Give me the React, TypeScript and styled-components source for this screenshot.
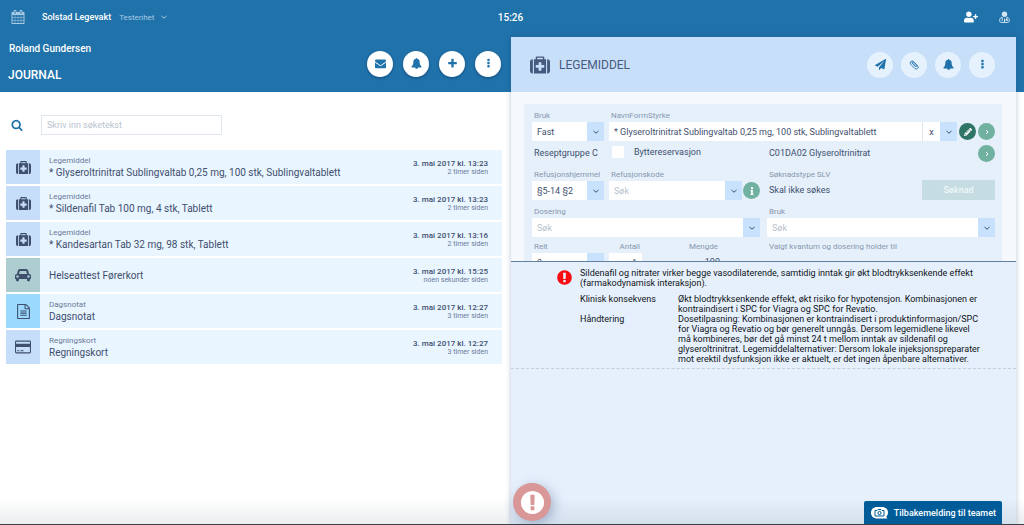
import React from 'react';
import styled, { createGlobalStyle } from 'styled-components';
import { FaInfo, FaPencilAlt, FaUserPlus } from 'react-icons/fa';

const blue = '#2072aa';
const ink = '#3f4f6e';
const muted = '#8797ae';

const GlobalStyle = createGlobalStyle`
  *, *::before, *::after { box-sizing: border-box; }
  body { margin: 0; font-family: Roboto, "Liberation Sans", sans-serif; font-size: 9px; color: ${ink}; background: #fff; }
  h1, h2, p, ul, dl, dd { margin: 0; padding: 0; }
  button, input, select { font: inherit; color: inherit; margin: 0; border: 0; padding: 0; border-radius: 0; background: none; outline: 0; min-width: 0; }
  button { cursor: pointer; }
  svg { display: block; flex: none; }
`;

const Page = styled.div`
  display: flex;
  flex-direction: column;
  min-height: 100vh;
`;

const TopBar = styled.header`
  display: grid;
  grid-template-columns: 1fr auto 1fr;
  align-items: center;
  height: 37px;
  padding: 0 14px 3px 11px;
  background: ${blue};
  color: #fff;
`;

const Unit = styled.div`
  display: flex;
  align-items: center;
  gap: 8px;
  font-size: 8px;
  color: #a9cbe4;
`;

const UnitName = styled.strong`
  margin-left: 9px;
  font-size: 9px;
  font-weight: 500;
  color: #fff;
`;

const PlainButton = styled.button`
  display: flex;
  align-items: center;
  gap: 7px;
`;

const Clock = styled.time`
  font-size: 10px;
  font-weight: 500;
`;

const Tools = styled.div`
  display: flex;
  justify-content: flex-end;
  align-items: center;
  gap: 21px;
`;

const Main = styled.main`
  flex: 1;
  display: grid;
  grid-template-columns: calc(50% + 3px) 1fr;
  padding-right: 8px;
  background: linear-gradient(${blue} 55px, #fff 55px);
`;

const Journal = styled.section`
  min-width: 0;
`;

const JournalHeader = styled.header`
  display: flex;
  justify-content: space-between;
  align-items: center;
  height: 55px;
  padding: 0 10px 2px 8px;
  color: #fff;
`;

const Patient = styled.p`
  padding: 0 1px 12px;
  font-size: 10px;
  line-height: 14px;
  font-weight: 500;
`;

const JournalTitle = styled.h1`
  padding-bottom: 4px;
  font-size: 12px;
  line-height: 14px;
  font-weight: 500;
`;

const Actions = styled.div<{ $gap: number }>`
  display: flex;
  gap: ${p => p.$gap}px;
`;

const RoundButton = styled.button<{ $pale?: boolean }>`
  display: flex;
  align-items: center;
  justify-content: center;
  width: 26px;
  height: 26px;
  border-radius: 50%;
  background: ${p => (p.$pale ? '#e5f2fd' : '#fff')};
  color: ${blue};
  box-shadow: ${p => (p.$pale ? 'none' : '0 1px 3px rgba(0, 30, 70, .45)')};
`;

const Search = styled.label`
  display: flex;
  align-items: center;
  gap: 18px;
  padding: 23px 11px 15px;
  color: ${blue};
`;

const SearchInput = styled.input`
  width: 181px;
  height: 20px;
  padding: 0 5px;
  border: 1px solid #dfe6ee;
  color: ${ink};
  &::placeholder { color: #bac4d0; opacity: 1; }
`;

const Entries = styled.ul`
  display: flex;
  flex-direction: column;
  gap: 2px;
  padding: 0 9px 0 6px;
  list-style: none;
`;

const Entry = styled.li`
  display: flex;
  align-items: center;
  height: 34px;
  padding-right: 14px;
  background: #e9f5ff;
`;

const EntryIcon = styled.span<{ $tone: string }>`
  display: flex;
  align-items: center;
  justify-content: center;
  width: 34px;
  height: 34px;
  background: ${p => p.$tone};
`;

const EntryText = styled.div`
  flex: 1;
  min-width: 0;
  padding: 2px 0 0 9px;
`;

const EntryType = styled.p`
  font-size: 8px;
  line-height: 10px;
  color: #6b7b98;
`;

const EntryTitle = styled.p`
  font-size: 10px;
  line-height: 14px;
`;

const EntryDate = styled.div`
  padding-top: 1px;
  font-size: 8px;
  line-height: 9px;
  font-weight: 500;
  text-align: right;
`;

const EntryAge = styled.p`
  font-size: 7px;
  font-weight: 400;
  color: #6b7b98;
`;

const Panel = styled.section`
  display: flex;
  flex-direction: column;
  min-width: 0;
  background: #f5f9fe;
  box-shadow: 0 0 5px rgba(30, 60, 120, .3);
`;

const PanelHeader = styled.header`
  display: flex;
  align-items: center;
  height: 55px;
  padding: 0 21px 0 19px;
  background: #c8dffa;
  color: #46597e;
`;

const PanelTitle = styled.h2`
  flex: 1;
  padding-left: 9px;
  font-size: 12px;
  font-weight: 400;
`;

const FormScroll = styled.div`
  height: 169px;
  padding: 12px 14px 0 13px;
  overflow: hidden;
`;

const Form = styled.form`
  display: flex;
  flex-direction: column;
  padding: 6px 7px 20px 8px;
  background: #e5f0fb;
`;

const Row = styled.div<{ $top?: number; $gap?: number; $align?: string }>`
  display: flex;
  flex: 1;
  min-width: 0;
  align-items: ${p => p.$align ?? 'flex-end'};
  gap: ${p => p.$gap ?? 7}px;
  padding-top: ${p => p.$top ?? 0}px;
`;

const Field = styled.label<{ $width?: number; $right?: boolean }>`
  flex: ${p => (p.$width ? `0 0 ${p.$width}px` : '1 1 0')};
  min-width: 0;
  text-align: ${p => (p.$right ? 'right' : 'left')};
`;

const Caption = styled.span`
  display: block;
  padding: 0 2px 1px;
  font-size: 8px;
  line-height: 11px;
  white-space: nowrap;
  color: ${muted};
`;

const Box = styled.span`
  display: grid;
  grid-template-columns: minmax(0, 1fr) auto 17px;
  height: 19px;
  background: #fff;
`;

const Select = styled.select`
  grid-area: 1 / 1 / 2 / 4;
  height: 19px;
  padding: 0 20px 0 5px;
  appearance: none;
`;

const SelectArrow = styled.span`
  display: flex;
  grid-area: 1 / 3;
  align-items: center;
  justify-content: center;
  background: #c8e1fc;
  pointer-events: none;
`;

const Input = styled.input`
  display: block;
  grid-area: 1 / 1;
  width: 100%;
  height: 19px;
  padding: 0 5px;
  background: #fff;
  text-align: inherit;
  &::placeholder { color: #b8c2cd; opacity: 1; }
`;

const ClearButton = styled.button`
  width: 18px;
  border-left: 1px solid #dfe6ee;
`;

const ArrowButton = styled.button`
  display: flex;
  grid-column: 3;
  align-items: center;
  justify-content: center;
  background: #c8e1fc;
`;

const GreenButton = styled.button<{ $dark?: boolean }>`
  display: flex;
  flex: none;
  align-items: center;
  justify-content: center;
  width: 17px;
  height: 17px;
  margin: 1px 0;
  border-radius: 50%;
  background: ${p => (p.$dark ? '#2f7566' : '#70b19f')};
  color: #fff;
`;

const Value = styled.p<{ $width?: number }>`
  flex: ${p => (p.$width ? `0 0 ${p.$width}px` : '1 1 0')};
  padding-left: 2px;
  line-height: 19px;
  white-space: nowrap;
`;

const Check = styled.label`
  display: flex;
  flex: 1;
  align-items: center;
  gap: 10px;
  padding-bottom: 3px;
`;

const CheckBox = styled.input`
  width: 12px;
  height: 12px;
  background: #fff;
  appearance: none;
  &:checked { background: ${blue}; }
`;

const ApplyButton = styled.button`
  width: 73px;
  height: 20px;
  border-radius: 1px;
  background: #c5dce2;
  color: #eff7f8;
  font-weight: 500;
`;

const Warning = styled.section`
  flex: 1;
  border-top: 1px solid #63809c;
  background: #e6f0fc;
  color: #101418;
`;

const WarningBody = styled.div`
  display: flex;
  gap: 7px;
  padding: 6px 24px 4px 45px;
  border-bottom: 1px dashed #c2cedb;
  line-height: 10px;
`;

const WarningIcon = styled.span`
  padding-top: 1px;
  color: #f80d12;
`;

const WarningText = styled.div`
  flex: 1;
`;

const Lead = styled.p`
  padding-bottom: 6px;
`;

const Details = styled.dl`
  display: grid;
  grid-template-columns: 98px 1fr;
`;

const BottomShade = styled.div`
  position: fixed;
  inset: auto 0 0;
  height: 26px;
  border-bottom: 1px solid #3c4148;
  background: linear-gradient(rgba(60, 80, 100, 0), rgba(60, 80, 100, .1));
  pointer-events: none;
`;

const AlertButton = styled.button`
  position: fixed;
  bottom: 4px;
  left: calc(50% + 1px);
  display: flex;
  align-items: center;
  justify-content: center;
  width: 38px;
  height: 38px;
  border-radius: 50%;
  background: #d99797;
  color: #fff;
  box-shadow: 3px 3px 12px rgba(50, 80, 130, .35);
`;

const Feedback = styled.button`
  position: fixed;
  right: 22px;
  bottom: 1px;
  display: flex;
  align-items: center;
  gap: 6px;
  height: 23px;
  padding: 0 6px 0 7px;
  border-radius: 2px 2px 0 0;
  background: #005b99;
  color: #fff;
  font-weight: 500;
`;

type GlyphProps = { d: string; size: number; box?: string };
const Glyph = ({ d, size, box = '0 0 1792 1792' }: GlyphProps) => (
  <svg width={size} height={size} viewBox={box} fill="currentColor" fillRule="evenodd" aria-hidden="true"><path d={d} /></svg>
);

const paths = {
  calendar: 'M192 1664h288v-288h-288v288zm352 0h320v-288h-320v288zm-352-352h288v-320h-288v320zm352 0h320v-320h-320v320zm-352-384h288v-288h-288v288zm736 736h320v-288h-320v288zm-384-736h320v-288h-320v288zm768 736h288v-288h-288v288zm-384-352h320v-320h-320v320zm-352-864v-288q0-13-9.500-22.500t-22.500-9.500h-64q-13 0-22.500 9.500t-9.500 22.500v288q0 13 9.500 22.500t22.500 9.500h64q13 0 22.500-9.500t9.500-22.500zm736 864h288v-320h-288v320zm-384-384h320v-288h-320v288zm384 0h288v-288h-288v288zm32-480v-288q0-13-9.500-22.500t-22.500-9.500h-64q-13 0-22.500 9.500t-9.500 22.500v288q0 13 9.500 22.500t22.500 9.500h64q13 0 22.500-9.500t9.500-22.500zm384-64v1280q0 52-38 90t-90 38h-1408q-52 0-90-38t-38-90v-1280q0-52 38-90t90-38h128v-96q0-66 47-113t113-47h64q66 0 113 47t47 113v96h384v-96q0-66 47-113t113-47h64q66 0 113 47t47 113v96h128q52 0 90 38t38 90z',
  search: 'M1216 832q0-185-131.500-316.500t-316.500-131.500-316.500 131.500-131.500 316.500 131.500 316.500 316.500 131.500 316.500-131.500 131.500-316.500zm512 832q0 52-38 90t-90 38q-54 0-90-38l-343-342q-179 124-399 124-143 0-273.500-55.500t-225-150-150-225-55.500-273.500 55.500-273.500 150-225 225-150 273.500-55.500 273.500 55.500 225 150 150 225 55.500 273.500q0 220-124 399l343 343q37 37 37 90z',
  medkit: 'M1280 1120v-192q0-32-32-32h-224v-224q0-32-32-32h-192q-32 0-32 32v224h-224q-32 0-32 32v192q0 32 32 32h224v224q0 32 32 32h192q32 0 32-32v-224h224q32 0 32-32zM640 384h512v-128h-512zM256 384v1280h-32q-92 0-158-66t-66-158v-832q0-92 66-158t158-66zM1440 384v1280h-1088v-1280h160v-160q0-40 28-68t68-28h576q40 0 68 28t28 68v160zM1792 608v832q0 92-66 158t-158 66h-32v-1280h32q92 0 158 66t66 158z',
  car: 'M480 1088q0-66-47-113t-113-47-113 47-47 113 47 113 113 47 113-47 47-113zm36-320h1016l-89-357q-2-8-14-17.500t-21-9.500h-768q-9 0-21 9.500t-14 17.500zm1372 320q0-66-47-113t-113-47-113 47-47 113 47 113 113 47 113-47 47-113zm160-96v384q0 14-9 23t-23 9h-96v128q0 80-56 136t-136 56-136-56-56-136v-128h-1024v128q0 80-56 136t-136 56-136-56-56-136v-128h-96q-14 0-23-9t-9-23v-384q0-93 65.500-158.500t158.500-65.500h28l105-419q23-94 104-157.500t179-63.500h768q98 0 179 63.500t104 157.500l105 419h28q93 0 158.500 65.500t65.500 158.500z',
  note: 'M1596 380q28 28 48 76t20 88v1152q0 40-28 68t-68 28h-1344q-40 0-68-28t-28-68v-1600q0-40 28-68t68-28h896q40 0 88 20t76 48zm-444-244v376h376q-10-29-22-41l-313-313q-12-12-41-22zm384 1528v-1024h-416q-40 0-68-28t-28-68v-416h-768v1536h1280zm-1024-864q0-14 9-23t23-9h704q14 0 23 9t9 23v64q0 14-9 23t-23 9h-704q-14 0-23-9t-9-23v-64zm736 224q14 0 23 9t9 23v64q0 14-9 23t-23 9h-704q-14 0-23-9t-9-23v-64q0-14 9-23t23-9h704zm0 256q14 0 23 9t9 23v64q0 14-9 23t-23 9h-704q-14 0-23-9t-9-23v-64q0-14 9-23t23-9h704z',
  card: 'M160 128h1600q160 0 160 160v1216q0 160-160 160h-1600q-160 0-160-160v-1216q0-160 160-160zM160 256q-32 0-32 32v224h1664v-224q0-32-32-32zM128 896v608q0 32 32 32h1600q32 0 32-32v-608zM256 1408v-128h256v128zM640 1408v-128h384v128z',
  mail: 'M1792 710v794q0 66-47 113t-113 47h-1472q-66 0-113-47t-47-113v-794q44 49 101 87 362 246 497 345 57 42 92.500 65.500t94.500 48 110 24.500h2q51 0 110-24.500t94.500-48 92.500-65.500q170-123 498-345 57-39 100-87zm0-294q0 79-49 151t-122 123q-376 261-468 325-10 7-42.500 31t-54 38.500-52 32.500-57.500 27-50 9h-2q-23 0-50-9t-57.500-27-52-32.500-54-38.500-42.500-31q-91-64-262-182.500t-205-142.500q-62-42-117-115.500t-55-136.500q0-78 41.500-130t118.500-52h1472q65 0 112.500 47t47.500 113z',
  bell: 'M912 1696q0-16-16-16-59 0-101.500-42.500t-42.500-101.500q0-16-16-16t-16 16q0 73 51.500 124.500t124.500 51.500q16 0 16-16zm816-288q0 52-38 90t-90 38h-448q0 106-75 181t-181 75-181-75-75-181h-448q-52 0-90-38t-38-90q50-42 91-88t85-119.500 74.500-158.500 50-206 19.500-260q0-152 117-282.500t307-158.500q-8-19-8-39 0-40 28-68t68-28 68 28 28 68q0 20-8 39 190 28 307 158.500t117 282.500q0 139 19.500 260t50 206 74.500 158.500 85 119.500 91 88z',
  plus: 'M1600 736v192q0 40-28 68t-68 28h-416v416q0 40-28 68t-68 28h-192q-40 0-68-28t-28-68v-416h-416q-40 0-68-28t-28-68v-192q0-40 28-68t68-28h416v-416q0-40 28-68t68-28h192q40 0 68 28t28 68v416h416q40 0 68 28t28 68z',
  dots: 'M1088 1248v192q0 40-28 68t-68 28h-192q-40 0-68-28t-28-68v-192q0-40 28-68t68-28h192q40 0 68 28t28 68zm0-512v192q0 40-28 68t-68 28h-192q-40 0-68-28t-28-68v-192q0-40 28-68t68-28h192q40 0 68 28t28 68zm0-512v192q0 40-28 68t-68 28h-192q-40 0-68-28t-28-68v-192q0-40 28-68t68-28h192q40 0 68 28t28 68z',
  plane: 'M1764 11q33 24 27 64l-256 1536q-5 29-32 45-14 8-31 8-11 0-24-5l-453-185-242 295q-18 23-49 23-13 0-22-4-19-7-30.500-23.500t-11.500-36.500v-349l864-1059-1069 925-395-162q-37-14-40-55-2-40 32-59l1664-960q15-9 32-9 20 0 36 11z',
  alert: 'M896 128q209 0 385.500 103t279.500 279.500 103 385.500-103 385.500-279.500 279.500-385.500 103-385.500-103-279.500-279.500-103-385.500 103-385.500 279.500-279.500 385.500-103zm128 1247v-190q0-14-9-23.500t-22-9.500h-192q-13 0-23 10t-10 23v190q0 13 10 23t23 10h192q13 0 22-9.500t9-23.500zm-2-344l18-621q0-12-10-18-10-8-24-8h-220q-14 0-24 8-10 6-10 18l17 621q0 10 10 17.500t24 7.500h185q14 0 23.500-7.500t10.500-17.500z',
};

const Chevron = ({ right }: { right?: boolean }) => (
  <svg width="6" height="6" viewBox="0 0 6 6" fill="none" stroke="currentColor" aria-hidden="true">
    <path d={right ? 'M2 1l2 2-2 2' : 'M.5 2L3 4.200 5.500 2'} />
  </svg>
);

const PaperclipIcon = () => (
  <svg width="10" height="10" viewBox="0 0 10 10" fill="none" stroke="currentColor" strokeWidth=".9" strokeLinecap="round" aria-hidden="true">
    <path d="M6.800 6.600L3.400 3.200a.9.900 0 0 1 1.300-1.300l3.900 3.900a1.900 1.900 0 0 1-2.700 2.700L1.600 4.200A2 2 0 0 1 4.400 1.400" />
    <path d="M3.400 3.200l3 3a.8.800 0 0 0 1.200-1.200L5 2.400" />
  </svg>
);

const DoctorIcon = () => (
  <svg width="11" height="12" viewBox="0 0 11 12" fill="none" stroke="#d3e5f2" aria-hidden="true">
    <circle cx="5.500" cy="3.200" r="2.700" fill="#d3e5f2" stroke="none" />
    <path d="M3 6.200C1.300 6.500.7 7.800.7 9.800c0 1 .6 1.600 1.500 1.600h6.600c.9 0 1.500-.6 1.500-1.600 0-2-.6-3.300-2.300-3.600M3.200 6.200v3.600M5.500 7.500v3.500M7.800 6.200v2.300M7 10V8.500h1.600V10" />
  </svg>
);

const FeedbackIcon = () => (
  <svg width="17" height="12" viewBox="0 0 17 12" aria-hidden="true">
    <path d="M6 0h5c3.500 0 6 2.300 6 5.500 0 1.800-.7 3.200-1.800 4.200l1.300 1.800H6c-3.500 0-6-2.500-6-5.800S2.500 0 6 0z" fill="#fff" />
    <path d="M4 3.500h2l1-1h3l1 1h2v5.500H4z" fill="none" stroke="#005b99" />
    <circle cx="8.500" cy="6" r="1.600" fill="none" stroke="#005b99" />
  </svg>
);

const drug = '* Glyseroltrinitrat Sublingvaltab 0,25 mg, 100 stk, Sublingvaltablett';
const medkit = <Glyph d={paths.medkit} size={15} />;

const entries = [
  { icon: medkit, tone: '#c7defa', type: 'Legemiddel', title: drug, date: '3. mai 2017 kl. 13:23', age: '2 timer siden' },
  { icon: medkit, tone: '#c7defa', type: 'Legemiddel', title: '* Sildenafil Tab 100 mg, 4 stk, Tablett', date: '3. mai 2017 kl. 13:23', age: '2 timer siden' },
  { icon: medkit, tone: '#c7defa', type: 'Legemiddel', title: '* Kandesartan Tab 32 mg, 98 stk, Tablett', date: '3. mai 2017 kl. 13:16', age: '2 timer siden' },
  { icon: <Glyph d={paths.car} size={16} box="0 0 2048 1792" />, tone: '#adcdd0', type: '', title: 'Helseattest Førerkort', date: '3. mai 2017 kl. 15:25', age: 'noen sekunder siden' },
  { icon: <Glyph d={paths.note} size={15} />, tone: '#9bdafe', type: 'Dagsnotat', title: 'Dagsnotat', date: '3. mai 2017 kl. 12:27', age: '3 timer siden' },
  { icon: <Glyph d={paths.card} size={16} box="0 0 1920 1792" />, tone: '#c7defa', type: 'Regningskort', title: 'Regningskort', date: '3. mai 2017 kl. 12:27', age: '3 timer siden' },
];

const SelectField = ({ label, value }: { label: string; value: string }) => (
  <Field $width={72}>
    <Caption>{label}</Caption>
    <Box>
      <Select defaultValue={value}><option>{value}</option></Select>
      <SelectArrow><Chevron /></SelectArrow>
    </Box>
  </Field>
);

const ComboField = ({ label, value, id }: { label: string; value?: string; id: string }) => (
  <Field as="div">
    <Caption as="label" htmlFor={id}>{label}</Caption>
    <Box>
      <Input id={id} type="text" placeholder="Søk" defaultValue={value} />
      {value && <ClearButton type="button" aria-label={`Tøm ${label}`}>x</ClearButton>}
      <ArrowButton type="button" aria-label={`Velg ${label}`}><Chevron /></ArrowButton>
    </Box>
  </Field>
);

export default function App() {
  return (
    <Page>
      <GlobalStyle />
      <TopBar>
        <Unit>
          <PlainButton type="button" aria-label="Kalender"><Glyph d={paths.calendar} size={14} /></PlainButton>
          <UnitName>Solstad Legevakt</UnitName>
          <PlainButton type="button">Testenhet <Chevron /></PlainButton>
        </Unit>
        <Clock>15:26</Clock>
        <Tools>
          <PlainButton type="button" aria-label="Ny pasient"><FaUserPlus size={14} /></PlainButton>
          <PlainButton type="button" aria-label="Bruker"><DoctorIcon /></PlainButton>
        </Tools>
      </TopBar>
      <Main>
        <Journal>
          <JournalHeader>
            <div>
              <Patient>Roland Gundersen</Patient>
              <JournalTitle>JOURNAL</JournalTitle>
            </div>
            <Actions $gap={10}>
              <RoundButton type="button" aria-label="Meldinger"><Glyph d={paths.mail} size={11} /></RoundButton>
              <RoundButton type="button" aria-label="Varsler"><Glyph d={paths.bell} size={11} /></RoundButton>
              <RoundButton type="button" aria-label="Ny"><Glyph d={paths.plus} size={11} /></RoundButton>
              <RoundButton type="button" aria-label="Mer"><Glyph d={paths.dots} size={11} /></RoundButton>
            </Actions>
          </JournalHeader>
          <Search>
            <Glyph d={paths.search} size={12} />
            <SearchInput type="text" placeholder="Skriv inn søketekst" aria-label="Søk" />
          </Search>
          <Entries>
            {entries.map((e, i) => (
              <Entry key={i}>
                <EntryIcon $tone={e.tone}>{e.icon}</EntryIcon>
                <EntryText>
                  {e.type && <EntryType>{e.type}</EntryType>}
                  <EntryTitle>{e.title}</EntryTitle>
                </EntryText>
                <EntryDate>
                  <p>{e.date}</p>
                  <EntryAge>{e.age}</EntryAge>
                </EntryDate>
              </Entry>
            ))}
          </Entries>
        </Journal>
        <Panel>
          <PanelHeader>
            <Glyph d={paths.medkit} size={20} />
            <PanelTitle>LEGEMIDDEL</PanelTitle>
            <Actions $gap={8}>
              <RoundButton $pale type="button" aria-label="Send"><Glyph d={paths.plane} size={11} /></RoundButton>
              <RoundButton $pale type="button" aria-label="Vedlegg"><PaperclipIcon /></RoundButton>
              <RoundButton $pale type="button" aria-label="Varsler"><Glyph d={paths.bell} size={11} /></RoundButton>
              <RoundButton $pale type="button" aria-label="Mer"><Glyph d={paths.dots} size={11} /></RoundButton>
            </Actions>
          </PanelHeader>
          <FormScroll>
            <Form>
              <Row $gap={5}>
                <SelectField label="Bruk" value="Fast" />
                <Row $gap={2}>
                  <ComboField id="drug" label="NavnFormStyrke" value={drug} />
                  <GreenButton $dark type="button" aria-label="Rediger"><FaPencilAlt size={8} /></GreenButton>
                  <GreenButton type="button" aria-label="Åpne"><Chevron right /></GreenButton>
                </Row>
              </Row>
              <Row $top={3} $align="center">
                <Row $align="center">
                  <Value $width={73}>Reseptgruppe C</Value>
                  <Check><CheckBox type="checkbox" />Byttereservasjon</Check>
                </Row>
                <Row $align="center">
                  <Value>C01DA02 Glyseroltrinitrat</Value>
                  <GreenButton type="button" aria-label="Åpne virkestoff"><Chevron right /></GreenButton>
                </Row>
              </Row>
              <Row $top={6}>
                <Row $gap={5}>
                  <SelectField label="Refusjonshjemmel" value="§5-14 §2" />
                  <Row $gap={1}>
                    <ComboField id="refund" label="Refusjonskode" />
                    <GreenButton type="button" aria-label="Informasjon"><FaInfo size={8} /></GreenButton>
                  </Row>
                </Row>
                <Row>
                  <Field as="div">
                    <Caption>Søknadstype SLV</Caption>
                    <Value>Skal ikke søkes</Value>
                  </Field>
                  <ApplyButton type="button">Søknad</ApplyButton>
                </Row>
              </Row>
              <Row $top={6}>
                <ComboField id="dosage" label="Dosering" />
                <ComboField id="use" label="Bruk" />
              </Row>
              <Row $top={4} $align="flex-start">
                <Row $gap={5} $align="flex-start">
                  <SelectField label="Reit" value="0" />
                  <Field $width={33} $right>
                    <Caption>Antall</Caption>
                    <Input type="text" defaultValue="1" />
                  </Field>
                  <Field $width={73} $right as="div">
                    <Caption>Mengde</Caption>
                    <Value>100</Value>
                  </Field>
                </Row>
                <Row><Caption>Valgt kvantum og dosering holder til</Caption></Row>
              </Row>
            </Form>
          </FormScroll>
          <Warning>
            <WarningBody>
              <WarningIcon><Glyph d={paths.alert} size={17} /></WarningIcon>
              <WarningText>
                <Lead>
                  Sildenafil og nitrater virker begge vasodilaterende, samtidig inntak gir økt blodtrykksenkende effekt<br />
                  (farmakodynamisk interaksjon).
                </Lead>
                <Details>
                  <dt>Klinisk konsekvens</dt>
                  <dd>
                    Økt blodtrykksenkende effekt, økt risiko for hypotensjon. Kombinasjonen er<br />
                    kontraindisert i SPC for Viagra og SPC for Revatio.
                  </dd>
                  <dt>Håndtering</dt>
                  <dd>
                    Dosetilpasning: Kombinasjonen er kontraindisert i produktinformasjon/SPC<br />
                    for Viagra og Revatio og bør generelt unngås. Dersom legemidlene likevel<br />
                    må kombineres, bør det gå minst 24 t mellom inntak av sildenafil og<br />
                    glyseroltrinitrat. Legemiddelalternativer: Dersom lokale injeksjonspreparater<br />
                    mot erektil dysfunksjon ikke er aktuelt, er det ingen åpenbare alternativer.
                  </dd>
                </Details>
              </WarningText>
            </WarningBody>
          </Warning>
        </Panel>
      </Main>
      <BottomShade />
      <AlertButton type="button" aria-label="Vis advarsler"><Glyph d={paths.alert} size={27} /></AlertButton>
      <Feedback type="button"><FeedbackIcon />Tilbakemelding til teamet</Feedback>
    </Page>
  );
}
